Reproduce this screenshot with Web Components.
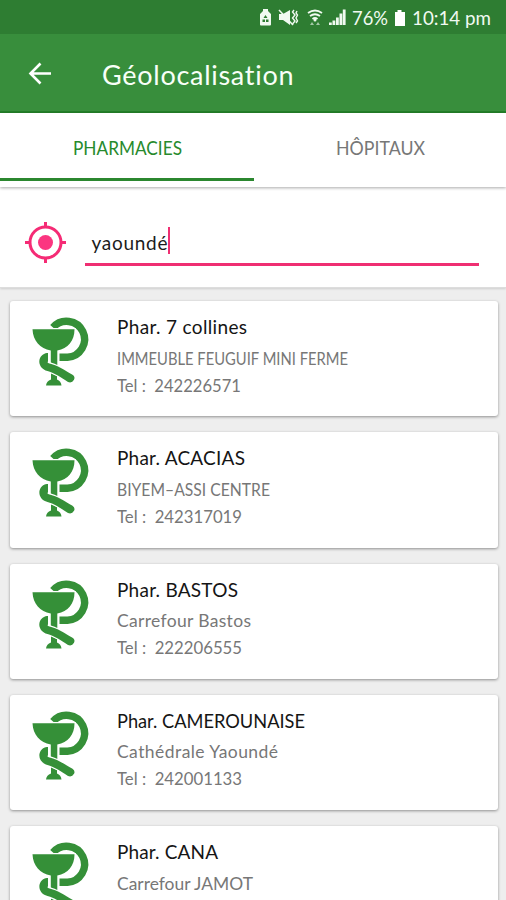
<!DOCTYPE html>
<html lang="fr"><head><meta charset="utf-8"><title>Géolocalisation</title>
<style>
html,body{margin:0;height:900px;overflow:hidden;background:#eee}
body{font-family:Lato,"Open Sans",sans-serif}
</style></head><body>
<geo-app></geo-app>
<script>
const define=(name,html,setup)=>customElements.define(name,class extends HTMLElement{
  connectedCallback(){
    if(this.shadowRoot)return;
    const t=document.createElement('template');
    t.innerHTML=typeof html==='function'?html(this):html;
    this.attachShadow({mode:'open'}).append(t.content.cloneNode(true));
    if(setup)setup(this);
  }
});

// Text that fills a given width: tracked out when short, narrowed when long.
define('fit-text','<style>:host{display:block;white-space:pre}span{display:inline-block;transform-origin:0 50%}</style><span><slot></slot></span>',el=>{
  const s=el.shadowRoot.querySelector('span'),target=+el.getAttribute('w');
  const w=s.getBoundingClientRect().width,n=el.textContent.length;
  if(w>target)s.style.transform='scaleX('+target/w+')';
  else s.style.letterSpacing=(target-w)/(n-1)+'px';
  el.style.width=target+'px';
});

define('status-bar',`<style>
:host{display:flex;height:34px;box-sizing:border-box;background:#2e7d32;color:#f1faf1;align-items:center;padding-left:259px;padding-top:1px;font-size:18.5px}
svg{display:block;flex:none}
</style>
<svg width="93" height="20" viewBox="0 0 93 20" fill="#f1faf1">
<path d="M1 6 4 3V1h5v2l3 3v10.500q0 1-1 1H2q-1 0-1-1Z"/><path d="M6.500 7 8.500 10h-4ZM3.500 11.500H6v2.500H3.500ZM7 11.500h2.500v2.500H7Z" fill="#2e7d32"/>
<path d="M20 6h4l7-4v15l-7-5h-4Z"/><path d="m20 2 14 15" stroke="#f1faf1" stroke-width="1.500"/><path d="M35 2l-1.500 2 2.500 3-2.500 3 2.500 3-2.500 3M38 3l-1 2 1.500 2-1.500 3 1.500 3-1.500 2" fill="none" stroke="#f1faf1" stroke-width="1.400"/>
<path d="M49 5q7-5 14 0M51 8q5-3.500 10 0M53.500 11q2.500-2 5 0" fill="none" stroke="#f1faf1" stroke-width="1.800"/><circle cx="56" cy="12" r="1.500"/><path d="m53 14-2 3h4Zm6 0 2 3h-4Z" opacity=".6"/>
<path d="M70 14.500h2.800V17H70Zm3.500-2h2.800V17h-2.800Zm3.500-3h2.800V17H77Zm3.500-4h2.800V17h-2.800Zm3.300-4h2.800V17h-2.800Z"/></svg>
<fit-text w="36">76%</fit-text>
<svg width="12" height="18" viewBox="0 0 12 18" style="margin-left:6px;margin-right:6px" fill="#fff"><path d="M1 3h2.500V1h4v2H11v14H1Z"/></svg>
<fit-text w="79" style="font-size:19.500px">10:14 pm</fit-text>`);

define('app-bar',el=>`<style>
:host{display:flex;height:79px;box-sizing:border-box;background:#388e3c;border-bottom:2px solid #248029;color:#f8fff8;align-items:center;padding:3px 0 0 26px}
svg{margin-right:48px;margin-bottom:1px;flex:none}fit-text{font-size:27px}
</style>
<svg width="28" height="28" viewBox="0 0 28 28" fill="none" stroke="#fff" stroke-width="2.600"><path d="M25 13.500H4.500M14.500 3.500 4.500 13.500l10 10"/></svg>
<fit-text w="192">${el.getAttribute('heading')}</fit-text>`);

define('tab-item',`<style>
:host{display:flex;flex:1;box-sizing:border-box;height:68px;justify-content:center;align-items:center;padding-top:4px;color:#777;font-size:19px;border-bottom:3px solid transparent}
:host([active]){color:#278a2d;border-bottom-color:#2b872f;flex:0 0 254px}
</style><slot></slot>`);
define('tab-bar',`<style>
:host{display:flex;height:74px;background:#fff;box-shadow:0 1px 3px #0005;position:relative;z-index:1}
</style><slot></slot>`);

define('search-field',el=>`<style>
:host{display:flex;height:101px;box-sizing:border-box;background:#fff;border-bottom:1px solid #ddd;padding:35px 27px 0 25px;box-shadow:0 1px 2px #0002}
.field{margin-left:19px;flex:1;height:44px;box-sizing:border-box;border-bottom:3px solid #ef2f72;display:flex;align-items:center;padding:0 0 0 6.500px;color:#1c1c1c;font-size:19px}
i{width:2px;height:27px;background:#ef2f72;margin-left:0;margin-top:-4px}svg{flex:none}
</style>
<svg width="41" height="41" viewBox="0 0 41 41" fill="none" stroke="#f52b75"><circle cx="20.500" cy="20.500" r="15.500" stroke-width="3"/><circle cx="20.500" cy="20.500" r="7.500" fill="#fb3580" stroke="none"/><path d="M20.500 0v6m0 29v6M0 20.500h6m29 0h6" stroke-width="3"/></svg>
<div class="field"><fit-text w="76">${el.getAttribute('value')}</fit-text><i></i></div>`);

define('bowl-icon',`<style>:host{display:block;flex:none;width:62px;height:74px}</style>
<svg width="62" height="74" viewBox="0 0 62 74" fill="none" stroke="#359038">
<path d="M23 12.500A18 18 0 1 1 37.500 42.300H29.500" stroke-width="7.400"/>
<path id="b" d="M2.500 14.300H44.500C44.500 26 38 33.500 27.300 35.600V51h-6.500V35.600C10 33.500 3 26 2.500 14.300Z" stroke="#fff" stroke-width="2.500" fill="#fff"/>
<path d="M2.500 14.300H44.500C44.500 26 38 33.500 27.300 35.600V51h-6.500V35.600C10 33.500 3 26 2.500 14.300Z" fill="#359038" stroke="none"/>
<path d="M16 70.500q.5-4.500 5-6V58l6 3v3.500q4 1.500 4.500 6Z" fill="#359038" stroke="none"/>
<path d="M17 42C12 44 12.500 50.500 18 52 27 54.500 34 59 41 63.500" stroke="#fff" stroke-width="10.500"/>
<path d="M15.500 38.200q1.300-.4 2.500-.1v8.100q-1.300 1.400.7 2.100C28 50.500 34 55 42.500 59.800q3 2 1.500 5-2 3.600-6 2.200C31 62.500 26 58.500 17.500 56 7 53 7 41 15.500 38.200Z" fill="#359038" stroke="none"/>
</svg>`);

define('pharmacy-card',el=>{
  const [a,b,c]=el.getAttribute('widths').split(','),tel=el.getAttribute('tel');
  return `<style>
:host{display:flex;flex:none;height:115.250px;box-sizing:border-box;background:#fff;border-radius:3px;box-shadow:0 1px 3px #0006;padding:14px 0 0 20px}
.copy{margin-left:25px;color:#777;font-size:17.500px;line-height:27px;margin-top:-1px}
.name{color:#151515;font-size:19px;line-height:25px;margin-bottom:5.500px}
</style><bowl-icon></bowl-icon><div class="copy">
<fit-text class="name" w="${a}">${el.getAttribute('name')}</fit-text>
<fit-text w="${b}">${el.getAttribute('place')}</fit-text>
${tel?`<fit-text w="${c}">Tel :  ${tel}</fit-text>`:''}</div>`});

define('geo-app',`<style>
:host{display:flex;flex-direction:column;width:506px;height:900px;overflow:hidden;background:#eee}
status-bar,app-bar,tab-bar,search-field{flex:none}
main{display:flex;flex-direction:column;gap:16px;padding:13px 8.500px 0 10px}
</style>
<status-bar></status-bar>
<app-bar heading="Géolocalisation"></app-bar>
<tab-bar><tab-item active><fit-text w="109">PHARMACIES</fit-text></tab-item><tab-item><fit-text w="89">HÔPITAUX</fit-text></tab-item></tab-bar>
<search-field value="yaoundé"></search-field>
<main>
<pharmacy-card name="Phar. 7 collines" place="IMMEUBLE FEUGUIF MINI FERME" tel="242226571" widths="130,231,124"></pharmacy-card>
<pharmacy-card name="Phar. ACACIAS" place="BIYEM–ASSI CENTRE" tel="242317019" widths="128,153,125"></pharmacy-card>
<pharmacy-card name="Phar. BASTOS" place="Carrefour Bastos" tel="222206555" widths="121,134,125"></pharmacy-card>
<pharmacy-card name="Phar. CAMEROUNAISE" place="Cathédrale Yaoundé" tel="242001133" widths="188,161,125"></pharmacy-card>
<pharmacy-card name="Phar. CANA" place="Carrefour JAMOT" widths="101,136"></pharmacy-card>
</main>`);
</script></body></html>
